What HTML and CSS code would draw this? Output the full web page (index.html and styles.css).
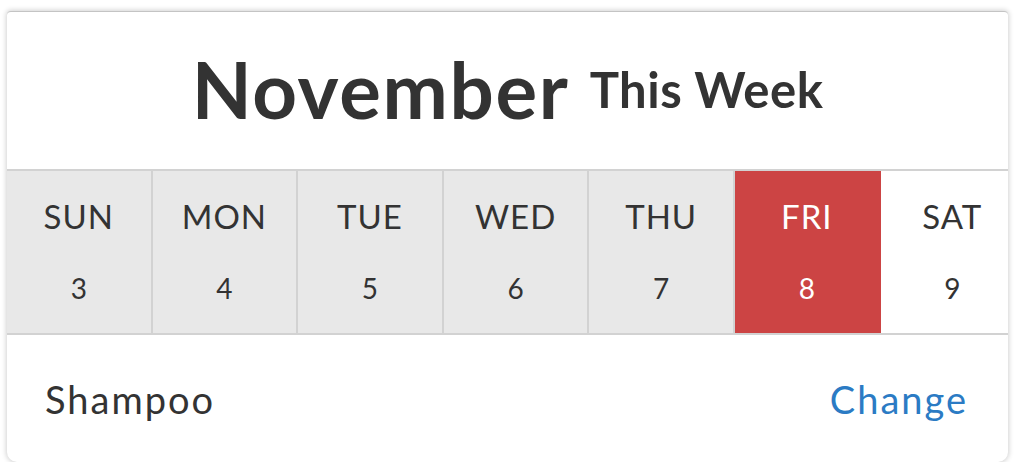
FILE: index.html
```html
<!DOCTYPE html>
<html>
<head>
<meta charset="utf-8">
<link rel="stylesheet" href="styles.css">
</head>
<body>
<div class="card">
  <div class="header">
    <span class="month">November</span>
    <span class="week">This Week</span>
  </div>
  <div class="days">
    <div class="day past"><span class="name">SUN</span><span class="num">3</span></div>
    <div class="day past"><span class="name">MON</span><span class="num">4</span></div>
    <div class="day past"><span class="name">TUE</span><span class="num">5</span></div>
    <div class="day past"><span class="name">WED</span><span class="num">6</span></div>
    <div class="day past"><span class="name">THU</span><span class="num">7</span></div>
    <div class="day today"><span class="name">FRI</span><span class="num">8</span></div>
    <div class="day"><span class="name">SAT</span><span class="num">9</span></div>
  </div>
  <div class="footer">
    <span class="service">Shampoo</span>
    <span class="change">Change</span>
  </div>
</div>
</body>
</html>
```
FILE: styles.css
```css
html, body {
  margin: 0;
  padding: 0;
  background: #ffffff;
}
body {
  font-family: "Lato", "Liberation Sans", sans-serif;
  color: #333333;
}
.card {
  margin: 11px 0 0 7px;
  width: 1001px;
  height: 451px;
  box-sizing: border-box;
  background: #ffffff;
  border-top: 1px solid #c4c4c4;
  border-radius: 4px 4px 10px 10px;
  box-shadow: 0 0 5px 1px rgba(0, 0, 0, 0.18);
  overflow: hidden;
  display: flex;
  flex-direction: column;
}
.header {
  height: 157px;
  box-sizing: border-box;
  flex: 0 0 auto;
  display: flex;
  align-items: center;
  justify-content: center;
  gap: 20px;
  padding: 0 0 3px 0;
}
.month {
  font-size: 78px;
  font-weight: 700;
  letter-spacing: 1.7px;
}
.week {
  font-size: 49px;
  font-weight: 700;
  letter-spacing: 0.5px;
}
.days {
  display: flex;
  height: 166px;
  box-sizing: border-box;
  flex: 0 0 auto;
  border-top: 2px solid #d2d2d2;
  border-bottom: 2px solid #d2d2d2;
  overflow: hidden;
}
.day {
  flex: 0 0 145.6px;
  box-sizing: border-box;
  border-right: 2px solid #d2d2d2;
  display: flex;
  flex-direction: column;
  align-items: center;
  padding-top: 27px;
}
.day.past {
  background: #e8e8e8;
}
.day.today {
  background: #cc4444;
  color: #ffffff;
  border-right-color: #cc4444;
}
.name {
  font-size: 33px;
  line-height: 36px;
  letter-spacing: 1px;
}
.num {
  font-size: 28px;
  line-height: 36px;
  margin-top: 36px;
}
.footer {
  flex: 1 1 auto;
  display: flex;
  align-items: center;
  justify-content: space-between;
  padding: 0 40px 0 38px;
  font-size: 38px;
  letter-spacing: 2px;
}
.change {
  color: #2b7bc4;
}
```
